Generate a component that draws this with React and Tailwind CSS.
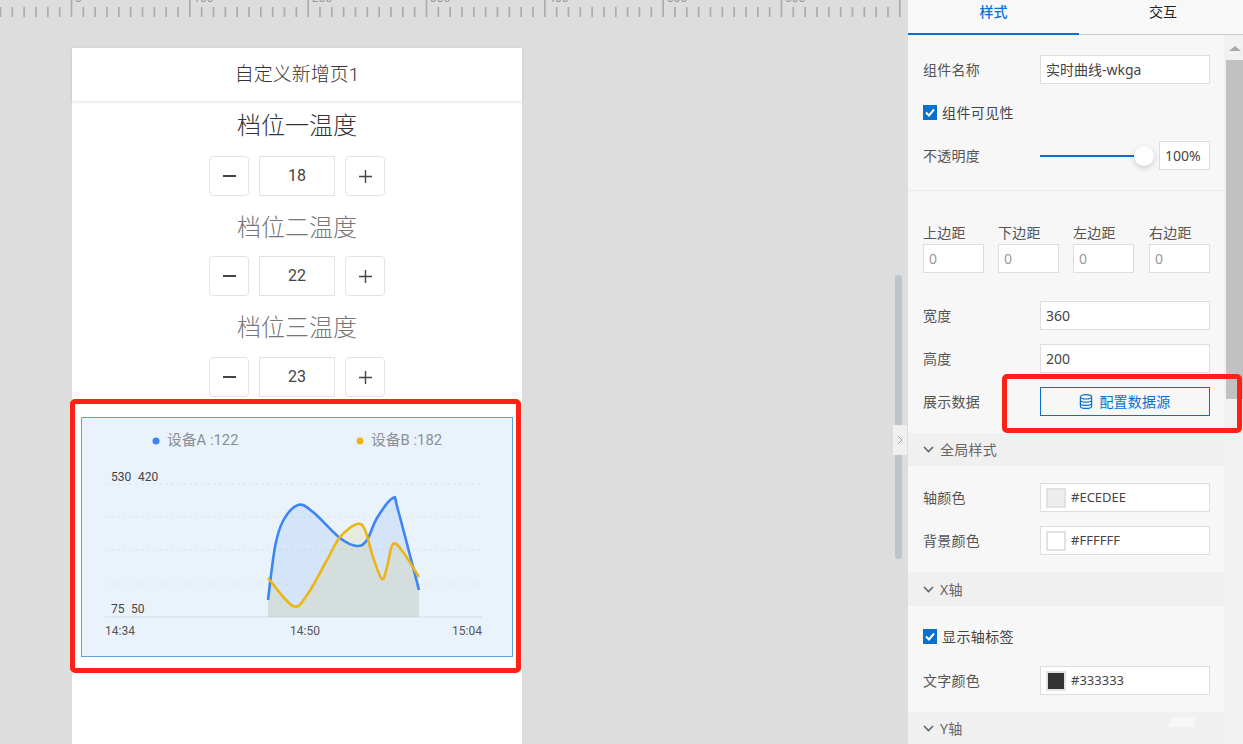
import React from "react";

const smooth = (p) => {
  let d = `M${p[0][0]} ${p[0][1]}`;
  for (let i = 0; i < p.length - 1; i++) {
    const a = p[Math.max(0, i - 1)], b = p[i], c = p[i + 1], e = p[Math.min(p.length - 1, i + 2)];
    d += ` C${b[0] + (c[0] - a[0]) / 6} ${b[1] + (c[1] - a[1]) / 6} ${c[0] - (e[0] - b[0]) / 6} ${c[1] - (e[1] - b[1]) / 6} ${c[0]} ${c[1]}`;
  }
  return d;
};

const OX = 82, OY = 418;
const blue = [[268, 600], [275, 547], [283, 521], [298, 505], [313, 512], [340, 538], [357, 546], [367, 540], [377, 518], [393, 498], [398, 510], [419, 590]].map(([x, y]) => [x - OX, y - OY]);
const yellow = [[268, 578], [293, 606], [307, 595], [327, 560], [340, 537], [357, 524], [365, 530], [373, 557], [382, 579], [387, 567], [393, 544], [403, 552], [419, 577]].map(([x, y]) => [x - OX, y - OY]);
const base = 617 - OY;
const area = (p) => `${smooth(p)} L${p[p.length - 1][0]} ${base} L${p[0][0]} ${base} Z`;

function Ruler() {
  const ticks = [];
  for (let i = 0; i < 77; i++) {
    const x = 0.5 + i * 11.833;
    const major = i % 10 === 6;
    ticks.push(<line key={i} x1={x} x2={x} y1={major ? 0 : 7} y2={17} stroke="#acacac" strokeWidth="1.7" />);
  }
  return (
    <svg width="908" height="17" className="block shrink-0">
      {ticks}
      {[0, 100, 200, 300, 400, 500, 600].map((n, i) => (
        <text key={n} x={75 + i * 118.33} y="2" fontSize="12" fill="#999" fontFamily="Roboto">{n}</text>
      ))}
    </svg>
  );
}

function Stepper({ value, mt }) {
  return (
    <div className={`flex justify-center gap-[10px] h-[40px] shrink-0 ${mt}`}>
      <div className="w-[40px] h-[40px] border border-[#e3e3e3] rounded-[4px] flex items-center justify-center">
        <div className="w-[13px] h-[2px] bg-[#444]" />
      </div>
      <div className="w-[76px] h-[40px] border border-[#e3e3e3] flex items-center justify-center text-[16px] text-[#444]">{value}</div>
      <div className="w-[40px] h-[40px] border border-[#e3e3e3] rounded-[4px] flex items-center justify-center">
        <svg width="13" height="13"><path d="M0 6.5H13M6.5 0V13" stroke="#444" strokeWidth="1.4" /></svg>
      </div>
    </div>
  );
}

function Title({ children, color, mt }) {
  return <div className={`h-[34px] shrink-0 flex items-center justify-center text-[24px] font-light ${color} ${mt}`}>{children}</div>;
}

function Chart() {
  return (
    <svg width="430" height="238" className="block">
      {[484, 517, 550, 584].map((y) => (
        <line key={y} x1={105 - OX} x2={482 - OX} y1={y - OY} y2={y - OY} stroke="#d9e5ee" strokeWidth="1" strokeDasharray="3 3" />
      ))}
      <line x1={105 - OX} x2={482 - OX} y1={base} y2={base} stroke="#d9e6ef" strokeWidth="1.5" />
      <path d={area(blue)} fill="#3b82f6" fillOpacity="0.12" />
      <path d={area(yellow)} fill="#d9b520" fillOpacity="0.13" />
      <path d={smooth(blue)} fill="none" stroke="#3b85f5" strokeWidth="2.6" />
      <path d={smooth(yellow)} fill="none" stroke="#ecb414" strokeWidth="2.6" />
      <circle cx={156 - OX} cy={441 - OY} r="3.5" fill="#3b85f5" />
      <circle cx={360 - OX} cy={441 - OY} r="3.5" fill="#ecb414" />
      <g fontFamily="Roboto, 'Noto Sans CJK SC', sans-serif">
        <text x={167 - OX} y={445 - OY} fontSize="14.8" fill="#8b8f96">设备A :122</text>
        <text x={371 - OX} y={445 - OY} fontSize="14.8" fill="#8b8f96">设备B :182</text>
        <text x={111 - OX} y={481 - OY} fontSize="12" fill="#444">530</text>
        <text x={138 - OX} y={481 - OY} fontSize="12" fill="#444">420</text>
        <text x={111 - OX} y={613 - OY} fontSize="12" fill="#444">75</text>
        <text x={131 - OX} y={613 - OY} fontSize="12" fill="#444">50</text>
        <text x={105 - OX} y={635 - OY} fontSize="12" fill="#555">14:34</text>
        <text x={290 - OX} y={635 - OY} fontSize="12" fill="#555">14:50</text>
        <text x={482 - OX} y={635 - OY} fontSize="12" fill="#555" textAnchor="end">15:04</text>
      </g>
    </svg>
  );
}

function Input({ children, className = "w-[170px]", gray, small }) {
  return (
    <div className={`h-[29px] bg-white border border-[#dedede] flex items-center pl-[5px] ${small ? "text-[13px]" : "text-[14px]"} ${gray ? "text-[#999]" : "text-[#444]"} ${className}`}>
      {children}
    </div>
  );
}

function Row({ label, children, mt }) {
  return (
    <div className={`flex items-center pl-[15px] h-[29px] ${mt}`}>
      <div className="w-[117px] text-[14px] tracking-[0.25px] text-[#555]">{label}</div>
      {children}
    </div>
  );
}

function Check({ label, mt }) {
  return (
    <div className={`flex items-center pl-[15px] h-[16px] ${mt}`}>
      <div className="w-[14px] h-[15px] bg-[#0a70d0] flex items-center justify-center mr-[5px]">
        <svg width="10" height="9" viewBox="0 0 10 9"><path d="M1 4.5L4 7.5L9 1.5" fill="none" stroke="#fff" strokeWidth="2" /></svg>
      </div>
      <span className="text-[14px] tracking-[0.4px] text-[#444]">{label}</span>
    </div>
  );
}

function Section({ label, h }) {
  return (
    <div className={`flex items-center pl-[15px] bg-[#f0f0f0] text-[14px] tracking-[0.25px] text-[#666] ${h}`}>
      <svg width="11" height="7" viewBox="0 0 11 7" className="mr-[6px]"><path d="M1 1L5.5 5.5L10 1" fill="none" stroke="#666" strokeWidth="1.6" /></svg>
      {label}
    </div>
  );
}

function ColorRow({ label, hex, swatch, mt }) {
  return (
    <Row label={label} mt={mt}>
      <Input small>
        <div className="w-[20px] h-[20px] border-2 border-[#e2e2e2] mr-[5px]" style={{ background: swatch }} />
        {hex}
      </Input>
    </Row>
  );
}

function Margin({ label }) {
  return (
    <div className="flex flex-col w-[61px]">
      <div className="h-[22px] text-[14px] tracking-[0.25px] text-[#555] whitespace-nowrap flex items-center pb-[2px]">{label}</div>
      <Input className="w-[61px] h-[29px]" gray>0</Input>
    </div>
  );
}

export default function App() {
  return (
    <div className="relative w-[1243px] h-[744px] overflow-hidden flex bg-[#dddddd] font-['Roboto','Noto_Sans_CJK_SC',sans-serif]">
      <div className="w-[908px] shrink-0 flex flex-col">
        <Ruler />
        <div className="ml-[72px] mt-[31px] w-[450px] flex-1 bg-white flex flex-col">
          <div className="h-[53px] shrink-0 flex items-center justify-center text-[19px] text-[#333] shadow-[0_1px_3px_rgba(0,0,0,0.12)] font-light pt-[1px]">自定义新增页1</div>
          <Title color="text-[#333]" mt="mt-[8px]">档位一温度</Title>
          <Stepper value="18" mt="mt-[13px]" />
          <Title color="text-[#777]" mt="mt-[15px]">档位二温度</Title>
          <Stepper value="22" mt="mt-[11px]" />
          <Title color="text-[#777]" mt="mt-[15px]">档位三温度</Title>
          <Stepper value="23" mt="mt-[12px]" />
          <div className="relative ml-[9px] mt-[20px] w-[432px] h-[240px] shrink-0 bg-[#eaf3fb] border border-[#5ba3e0]">
            <Chart />
          </div>
        </div>
      </div>

      <div className="flex-1 flex flex-col font-['Noto_Sans','Noto_Sans_CJK_SC',sans-serif]">
        <div className="h-[35px] shrink-0 flex bg-[#f8f8f8]">
          <div className="w-[171px] h-[35px] border-b-2 border-[#0a70d0] text-[#0a70d0] text-[14px] font-medium flex items-center justify-center pb-[11px]">样式</div>
          <div className="w-[164px] h-[35px] border-b border-[#cccccc] text-[#222] text-[14px] flex items-center justify-center pb-[11px] pl-[4px]">交互</div>
        </div>
        <div className="flex-1 flex min-h-0">
          <div className="w-[316px] shrink-0 bg-[#f7f7f7] flex flex-col">
            <Row label="组件名称" mt="mt-[20px]"><Input>实时曲线-wkga</Input></Row>
            <Check label="组件可见性" mt="mt-[20px]" />
            <div className="flex items-center pl-[15px] h-[29px] mt-[21px]">
              <div className="w-[117px] text-[14px] tracking-[0.25px] text-[#555]">不透明度</div>
              <div className="w-[95px] h-[2px] bg-[#0a70d0]" />
              <div className="w-[20px] h-[20px] rounded-full bg-white shadow-[0_2px_6px_rgba(0,0,0,0.18)] -ml-[1px] mr-[5px]" />
              <Input className="w-[51px]">100%</Input>
            </div>
            <div className="h-px bg-[#ebebeb] mt-[20px] shrink-0" />
            <div className="flex pl-[15px] mt-[31px]">
              <Margin label="上边距" />
              <div className="w-[14px]" />
              <Margin label="下边距" />
              <div className="w-[14px]" />
              <Margin label="左边距" />
              <div className="w-[15px]" />
              <Margin label="右边距" />
            </div>
            <Row label="宽度" mt="mt-[28px]"><Input>360</Input></Row>
            <Row label="高度" mt="mt-[14px]"><Input>200</Input></Row>
            <Row label="展示数据" mt="mt-[14px]">
              <div className="w-[170px] h-[29px] border border-[#0a70d0] flex items-center justify-center text-[14px] tracking-[0.25px] text-[#0a70d0] gap-[6px]">
                <svg width="14" height="15" viewBox="0 0 14 15" fill="none" stroke="#0a70d0" strokeWidth="1.2">
                  <ellipse cx="7" cy="2.8" rx="5.6" ry="2.2" />
                  <path d="M1.4 2.8V12.2C1.4 13.4 3.9 14.4 7 14.4S12.6 13.4 12.6 12.2V2.8M1.4 6C1.4 7.2 3.9 8.2 7 8.2S12.6 7.2 12.6 6M1.4 9.2C1.4 10.4 3.9 11.4 7 11.4S12.6 10.4 12.6 9.2" />
                </svg>
                配置数据源
              </div>
            </Row>
            <div className="mt-[17px]"><Section label="全局样式" h="h-[33px]" /></div>
            <ColorRow label="轴颜色" hex="#ECEDEE" swatch="#ecedee" mt="mt-[17px]" />
            <ColorRow label="背景颜色" hex="#FFFFFF" swatch="#ffffff" mt="mt-[14px]" />
            <div className="mt-[17px]"><Section label="X轴" h="h-[34px]" /></div>
            <Check label="显示轴标签" mt="mt-[22px]" />
            <ColorRow label="文字颜色" hex="#333333" swatch="#333333" mt="mt-[22px]" />
            <div className="mt-[17px] flex-1"><Section label="Y轴" h="h-[33px]" /></div>
          </div>
          <div className="flex-1 bg-[#f1f1f1] flex flex-col items-end">
            <div className="w-[17px] h-[25px] flex justify-center items-center pt-[2px]">
              <div className="w-0 h-0 border-x-[6px] border-x-transparent border-b-[5px] border-b-[#a8a8a8]" />
            </div>
            <div className="w-[17px] h-[339px] bg-[#c1c1c1]" />
          </div>
        </div>
      </div>

      {/* overlays */}
      <div className="absolute left-[895px] top-[275px] w-[7px] h-[284px] rounded-[4px] bg-[#bcc4cd]" />
      <div className="absolute left-[893px] top-[425px] w-[14px] h-[30px] bg-[#f0f0f0] flex items-center justify-center">
        <svg width="6" height="10" viewBox="0 0 6 10"><path d="M1 1L5 5L1 9" fill="none" stroke="#999" strokeWidth="1" /></svg>
      </div>
      <div className="absolute left-[1168px] top-[717px] w-[27px] h-[10px] bg-[#f7f7f7] rounded-tl-[20px]" />
      <div className="absolute left-[70px] top-[399px] w-[451px] h-[274px] border-[5px] border-[#ff2116] rounded-[5px]" />
      <div className="absolute left-[1002px] top-[374px] w-[240px] h-[59px] border-[5px] border-[#ff2116] rounded-[5px]" />
    </div>
  );
}
